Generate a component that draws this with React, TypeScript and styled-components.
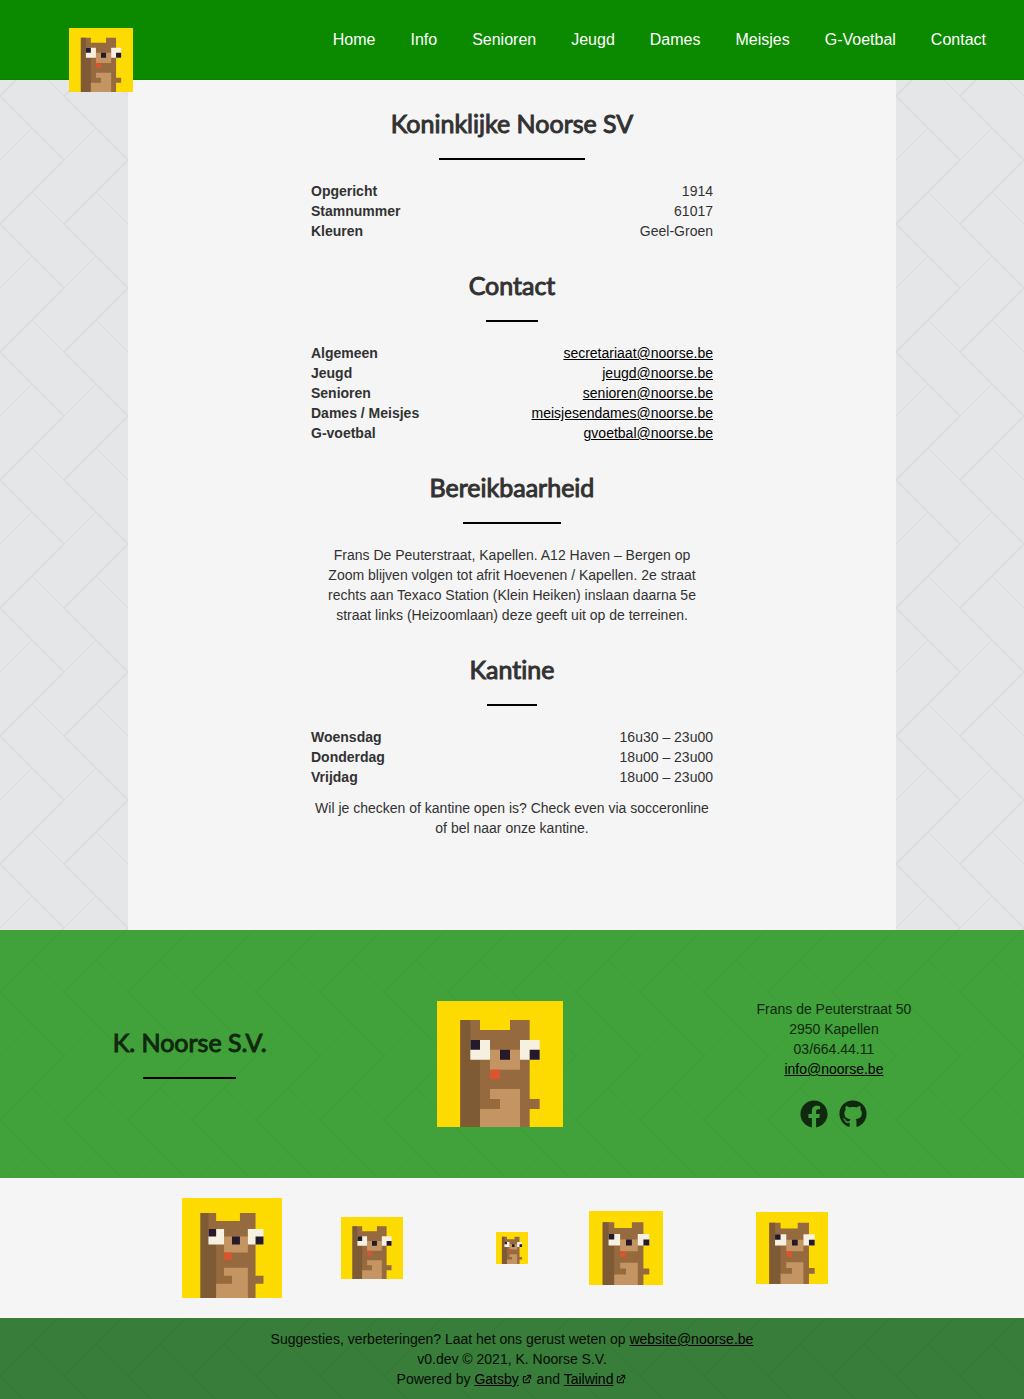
import React from "react";
import styled, { createGlobalStyle } from "styled-components";
import { FaFacebook, FaGithub } from "react-icons/fa";
import { HiExternalLink } from "react-icons/hi";

const tile = `<svg xmlns='http://www.w3.org/2000/svg' width='64' height='128' viewBox='0 0 64 128' fill='none' stroke='#000'><path stroke-width='2' stroke-opacity='.04' d='M-4 -36L64 32L-4 100M0 96L36 132M64 32L68 28'/><path stroke-width='1' stroke-opacity='.05' d='M32 0L0 32M32 64L64 96'/></svg>`;
const tileUrl = `url("data:image/svg+xml,${encodeURIComponent(tile).replace(/'/g, "%27")}")`;

const GlobalStyle = createGlobalStyle`
  *, *::before, *::after { box-sizing: border-box; }
  body {
    margin: 0;
    background: #e4e6e8 ${tileUrl};
    color: #323232;
    font: 14px/20px "Liberation Sans", Arial, sans-serif;
  }
  h1, h2, p, dl, dd, ul { margin: 0; padding: 0; }
`;

const Header = styled.header`
  display: flex;
  justify-content: space-between;
  height: 80px;
  padding: 0 38px 0 69px;
  background: #0b8a00;
  border-bottom: 1px solid #0a8000;
`;

const Brand = styled.a`
  position: relative;
  z-index: 1;
  display: block;
  width: 64px;
  height: 64px;
  margin-top: 28px;
`;

const Nav = styled.nav`
  display: flex;
  align-items: center;
  gap: 35px;
`;

const NavLink = styled.a`
  color: #fff;
  font-size: 16px;
  text-decoration: none;
`;

const Main = styled.main`
  width: 75%;
  margin: 0 auto;
  padding: 28px 16px 92px;
  background: #f5f5f5;
`;

const Section = styled.section`
  display: flex;
  flex-direction: column;
  gap: 11px;
  width: 100%;
  max-width: 402px;
  margin: 0 auto;

  & + & { margin-top: 29px; }
`;

const Title = styled.h2`
  align-self: center;
  padding-bottom: 10px;
  font: 400 25px/30px Lato, sans-serif;
  font-variant-ligatures: none;
  -webkit-text-stroke: 1px currentColor;

  &::after {
    content: "";
    display: block;
    width: 60%;
    height: 2px;
    margin: 20px auto 0;
    background: #000;
  }
`;

const Facts = styled.dl`
  display: grid;
  grid-template-columns: auto auto;
  justify-content: space-between;
`;

const Term = styled.dt`
  font-weight: 700;
`;

const Value = styled.dd`
  text-align: right;
`;

const Link = styled.a`
  color: #000;
`;

const Text = styled.p`
  padding: 0 3px;
  text-align: center;
`;

const Footer = styled.footer`
  display: flex;
  align-items: center;
  justify-content: space-between;
  padding: 69px 11% 49px;
  background: rgba(11, 138, 0, 0.75);
  color: #10280e;
`;

const FooterTitle = styled.div`
  padding-bottom: 12px;
`;

const FooterLogo = styled.div`
  width: 150px;
  padding-right: 24px;
`;

const Address = styled.address`
  font-style: normal;
  text-align: center;
`;

const Social = styled.div`
  display: flex;
  justify-content: center;
  gap: 11px;
  padding-top: 21px;
`;

const SocialLink = styled.a`
  display: block;
  height: 29px;
  color: inherit;
`;

const Sponsors = styled.section`
  display: grid;
  grid-template-columns: repeat(5, minmax(0, 140px));
  justify-content: center;
  align-items: center;
  padding: 20px 0;
  background: #f5f5f5;
`;

const Sponsor = styled.a<{ $size: number; $start?: boolean }>`
  display: block;
  width: ${(p) => p.$size}px;
  margin-left: ${(p) => (p.$start ? 7 : 0)}px;
  justify-self: ${(p) => (p.$start ? "start" : "center")};
`;

const Colophon = styled.div`
  padding: 11px 16px 10px;
  background: rgba(0, 89, 0, 0.75);
  color: #050c05;
  text-align: center;
`;

const External = styled(HiExternalLink)`
  width: 12px;
  height: 12px;
  margin-left: 2px;
  vertical-align: -1px;
`;

const Picture = styled.svg`
  display: block;
  width: 100%;
  height: auto;
`;

const Mascot = () => (
  <Picture viewBox="0 0 378 378" role="img" aria-label="K. Noorse S.V.">
    <path fill="#fedb00" d="M0 0h378v378H0z" />
    <path fill="#946a3e" d="M70 57h59v30h90V57h59v237h30v30h-30v54H70z" />
    <path fill="#7f5b35" d="M70 57h30v119h29v202H70z" />
    <path fill="#c49563" d="M159 146h90v60h-90zM159 264h90v114H129v-54h60v-30h-30z" />
    <path fill="#f6f0e0" d="M100 117h59v59h-59zM249 117h59v59h-59z" />
    <path fill="#261a2a" d="M100 117h29v29h-29zM189 146h30v30h-30zM278 146h30v30h-30z" />
    <path fill="#d9552f" d="M159 206h30v29h-30z" />
  </Picture>
);

const pages = ["Home", "Info", "Senioren", "Jeugd", "Dames", "Meisjes", "G-Voetbal", "Contact"];

const club = [
  ["Opgericht", "1914"],
  ["Stamnummer", "61017"],
  ["Kleuren", "Geel-Groen"],
];

const contacts = [
  ["Algemeen", "secretariaat@noorse.be"],
  ["Jeugd", "jeugd@noorse.be"],
  ["Senioren", "senioren@noorse.be"],
  ["Dames / Meisjes", "meisjesendames@noorse.be"],
  ["G-voetbal", "gvoetbal@noorse.be"],
];

const hours = [
  ["Woensdag", "16u30 – 23u00"],
  ["Donderdag", "18u00 – 23u00"],
  ["Vrijdag", "18u00 – 23u00"],
];

const sponsors = [
  { size: 100 },
  { size: 62 },
  { size: 32 },
  { size: 74, start: true },
  { size: 72 },
];

const Mail = ({ to }: { to: string }) => <Link href={`mailto:${to}`}>{to}</Link>;

const FactList = ({ rows }: { rows: string[][] }) => (
  <Facts>
    {rows.map(([term, value]) => (
      <React.Fragment key={term}>
        <Term>{term}</Term>
        <Value>{value.includes("@") ? <Mail to={value} /> : value}</Value>
      </React.Fragment>
    ))}
  </Facts>
);

export default function App() {
  return (
    <>
      <GlobalStyle />
      <Header>
        <Brand href="#">
          <Mascot />
        </Brand>
        <Nav>
          {pages.map((page) => (
            <NavLink key={page} href="#">
              {page}
            </NavLink>
          ))}
        </Nav>
      </Header>
      <Main>
        <Section>
          <Title as="h1">Koninklijke Noorse SV</Title>
          <FactList rows={club} />
        </Section>
        <Section>
          <Title>Contact</Title>
          <FactList rows={contacts} />
        </Section>
        <Section>
          <Title>Bereikbaarheid</Title>
          <Text>
            Frans De Peuterstraat, Kapellen. A12 Haven – Bergen op Zoom blijven volgen tot afrit
            Hoevenen / Kapellen. 2e straat rechts aan Texaco Station (Klein Heiken) inslaan daarna 5e
            straat links (Heizoomlaan) deze geeft uit op de terreinen.
          </Text>
        </Section>
        <Section>
          <Title>Kantine</Title>
          <FactList rows={hours} />
          <Text>
            Wil je checken of kantine open is? Check even via socceronline of bel naar onze kantine.
          </Text>
        </Section>
      </Main>
      <Footer>
        <FooterTitle>
          <Title>K. Noorse S.V.</Title>
        </FooterTitle>
        <FooterLogo>
          <Mascot />
        </FooterLogo>
        <Address>
          Frans de Peuterstraat 50
          <br />
          2950 Kapellen
          <br />
          03/664.44.11
          <br />
          <Mail to="info@noorse.be" />
          <Social>
            <SocialLink href="#" aria-label="Facebook">
              <FaFacebook size={28} />
            </SocialLink>
            <SocialLink href="#" aria-label="GitHub">
              <FaGithub size={28} />
            </SocialLink>
          </Social>
        </Address>
      </Footer>
      <Sponsors>
        {sponsors.map(({ size, start }) => (
          <Sponsor key={size} href="#" $size={size} $start={start}>
            <Mascot />
          </Sponsor>
        ))}
      </Sponsors>
      <Colophon>
        <p>
          Suggesties, verbeteringen? Laat het ons gerust weten op <Mail to="website@noorse.be" />
        </p>
        <p>v0.dev © 2021, K. Noorse S.V.</p>
        <p>
          Powered by <Link href="#">Gatsby</Link>
          <External /> and <Link href="#">Tailwind</Link>
          <External />
        </p>
      </Colophon>
    </>
  );
}
